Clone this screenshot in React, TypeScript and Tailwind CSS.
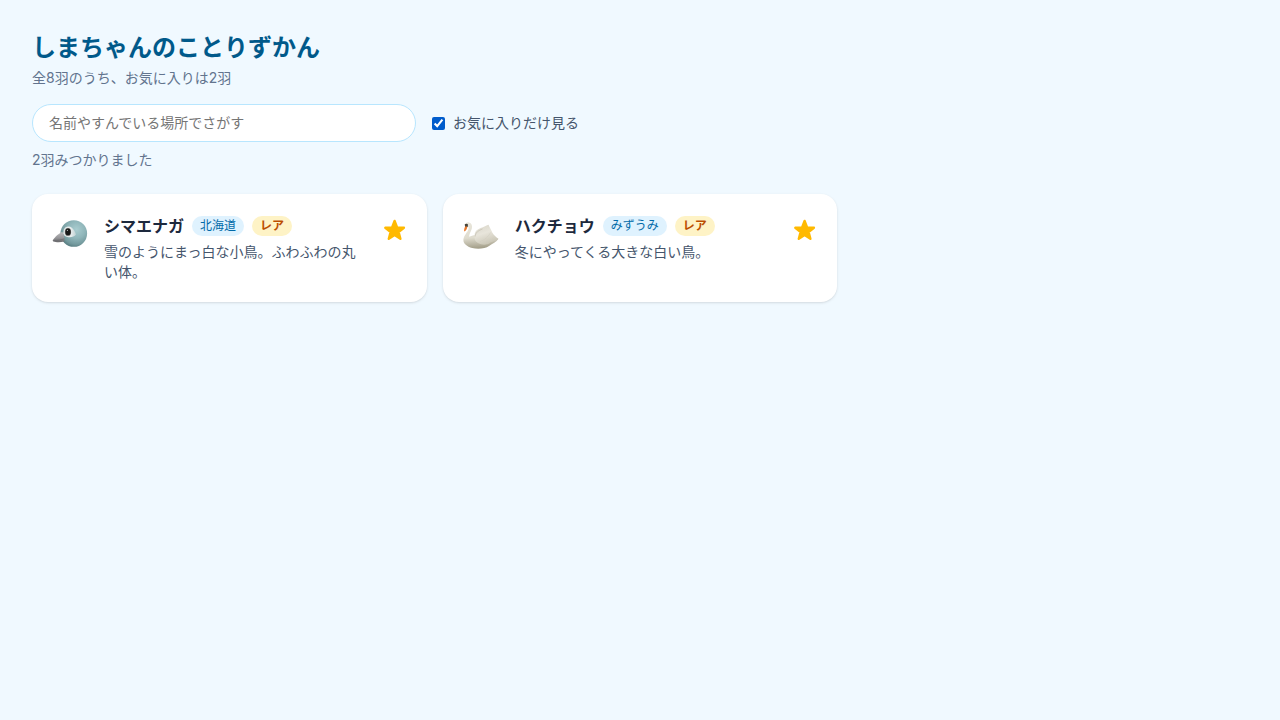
import { useState } from "react";

type Bird = {
  id: string;
  name: string;
  place: string;
  rare: boolean;
  description: string;
  Picture: () => React.ReactElement;
};

function LongTailedTit() {
  return (
    <svg viewBox="0 0 36 40" className="h-10 w-9 shrink-0" aria-hidden="true">
      <defs>
        <radialGradient id="tit-head" cx="0.6" cy="0.35" r="0.66">
          <stop offset="0" stopColor="#a9cccf" />
          <stop offset="0.5" stopColor="#8fb5b9" />
          <stop offset="0.85" stopColor="#73999d" />
          <stop offset="1" stopColor="#5c8185" />
        </radialGradient>
        <linearGradient id="tit-eye" x1="0" y1="0" x2="1" y2="0">
          <stop offset="0" stopColor="#dfe5e5" />
          <stop offset="0.6" stopColor="#e9eded" />
          <stop offset="1" stopColor="#bfd2d4" />
        </linearGradient>
        <linearGradient id="tit-beak" x1="0" y1="0" x2="0" y2="1">
          <stop offset="0" stopColor="#bcbcbe" />
          <stop offset="0.55" stopColor="#97979a" />
          <stop offset="1" stopColor="#67676a" />
        </linearGradient>
      </defs>
      <circle cx="21.8" cy="19.5" r="13.3" fill="url(#tit-head)" />
      <path d="M11.8 15.5C13 12.6 15.8 11.8 18.2 12.8C21 14 23.2 17.4 24 20.6C22.5 22.8 19.5 23.4 16.5 23.2C13.5 23 11.5 21.5 11.2 19.2Z" fill="url(#tit-eye)" />
      <path d="M0.9 26C2.5 23.7 6.5 19.2 10.4 18C12 20.5 12.9 24 12.2 27.6C8 28.7 3.5 28.4 1.5 27.5C0.8 27.1 0.5 26.6 0.9 26Z" fill="url(#tit-beak)" />
      <path d="M1.3 26.6C5.5 26.6 9.5 25.8 12.4 24.8" fill="none" stroke="#66676b" strokeWidth="0.6" />
      <ellipse cx="16" cy="17.9" rx="3.1" ry="3.9" fill="#777370" />
      <ellipse cx="16" cy="17.9" rx="2.6" ry="3.4" fill="#181818" />
      <circle cx="15.4" cy="16.3" r="0.6" fill="#c9cdcd" />
    </svg>
  );
}

function Swan() {
  return (
    <svg viewBox="0 0 36 40" className="h-10 w-9 shrink-0" aria-hidden="true">
      <defs>
        <linearGradient id="swan-body" x1="0" y1="0" x2="0.1" y2="1">
          <stop offset="0" stopColor="#e9e6db" />
          <stop offset="0.6" stopColor="#dfdccf" />
          <stop offset="1" stopColor="#a5a08b" />
        </linearGradient>
        <linearGradient id="swan-wing" x1="0" y1="0" x2="0.4" y2="1">
          <stop offset="0" stopColor="#d8d5c8" />
          <stop offset="0.5" stopColor="#e8e5db" />
          <stop offset="1" stopColor="#cbc7b7" />
        </linearGradient>
      </defs>
      <path d="M2 11.3C2.3 9 4 8.1 6 8.4C8.7 9 9.6 11.6 8.8 14.8C7.8 18.2 5.9 20.3 6.2 22.8C10.5 20.6 17 20 23 21.5L35.3 25C33.5 28 29.5 29.4 26 32C22.5 34.6 15 35.4 9.2 34C4 32.7 0.2 29.8 0.4 25.8C0.7 21.6 4.4 18.5 5.5 15.3C6 13.6 5.5 12.5 4.6 12.5Z" fill="url(#swan-body)" />
      <path d="M11.6 21.5C11.5 17 15 15 19.2 13.6C21.8 12.8 23.4 10.8 25.6 10.7C26.4 13.3 28.5 15.8 29.4 18.7C31 21.6 33.6 23.2 35.5 24.8C33.7 27.1 29.5 27.4 26.5 29.2C21.8 32.2 13.6 30.2 11.9 25.8C11.5 24.5 11.6 23 11.6 21.5Z" fill="url(#swan-wing)" />
      <path d="M12.2 22.5C12.3 18.5 15.5 16.6 19.5 14.9" fill="none" stroke="#bdb9a9" strokeWidth="0.6" />
      <path d="M17 27.5C21 26.8 26 22 27.5 18.5M20 28.6C24 27.8 28.5 25.7 31 23.6" fill="none" stroke="#d0cdc0" strokeWidth="0.5" />
      <path d="M1.7 10.6C2.4 9.6 4.2 9.6 5 10.6L4.7 13L2.3 13.8Z" fill="#45433b" />
      <path d="M2.2 12.4L4.3 12.4C4.2 14.6 3.2 16.7 1.2 17.5C0.9 15.8 1.3 13.9 2.2 12.4Z" fill="#ea7a2e" />
    </svg>
  );
}

function Star({ filled }: { filled: boolean }) {
  return (
    <svg viewBox="0 0 24 32" className="h-8 w-6" aria-hidden="true">
      <path
        d="M11.6 6.9L14.1 13.4L20.9 13.8L15.6 18.1L17.4 24.8L11.6 21.1L5.8 24.8L7.6 18.1L2.3 13.8L9.1 13.4Z"
        fill={filled ? "currentColor" : "none"}
        stroke="currentColor"
        strokeWidth="2.4"
        strokeLinejoin="round"
      />
    </svg>
  );
}

const TOTAL = 8;

const BIRDS: Bird[] = [
  {
    id: "shimaenaga",
    name: "シマエナガ",
    place: "北海道",
    rare: true,
    description: "雪のようにまっ白な小鳥。ふわふわの丸い体。",
    Picture: LongTailedTit,
  },
  {
    id: "hakucho",
    name: "ハクチョウ",
    place: "みずうみ",
    rare: true,
    description: "冬にやってくる大きな白い鳥。",
    Picture: Swan,
  },
];

export default function App() {
  const [query, setQuery] = useState("");
  const [onlyFavorites, setOnlyFavorites] = useState(true);
  const [favorites, setFavorites] = useState<string[]>(["shimaenaga", "hakucho"]);

  const shown = BIRDS.filter(
    (b) =>
      (b.name.includes(query) || b.place.includes(query)) &&
      (!onlyFavorites || favorites.includes(b.id)),
  );

  const toggle = (id: string) =>
    setFavorites((f) => (f.includes(id) ? f.filter((x) => x !== id) : [...f, id]));

  return (
    <div className="min-h-screen bg-sky-50 p-8 font-['Inter','Noto_Sans_CJK_JP',sans-serif]" lang="ja">
      <header>
        <h1 className="text-2xl font-bold text-sky-800">しまちゃんのことりずかん</h1>
        <p className="mt-1 text-sm text-slate-500">
          {`全${TOTAL}羽のうち、お気に入りは${favorites.length}羽`}
        </p>
      </header>

      <div className="mt-4 flex flex-wrap items-center gap-4">
        <input
          type="search"
          aria-label="名前やすんでいる場所でさがす"
          placeholder="名前やすんでいる場所でさがす"
          value={query}
          onChange={(e) => setQuery(e.target.value)}
          className="w-full max-w-sm rounded-full border border-sky-200 bg-white px-4 py-2 text-sm leading-5 placeholder:text-[#757575]"
        />
        <label className="flex items-center gap-2 text-sm text-slate-600">
          <input
            type="checkbox"
            checked={onlyFavorites}
            onChange={(e) => setOnlyFavorites(e.target.checked)}
            className="accent-[#005ccc]"
          />
          お気に入りだけ見る
        </label>
      </div>

      <p className="mt-2 text-sm text-slate-500">{`${shown.length}羽みつかりました`}</p>

      <ul className="mt-6 grid gap-4 sm:grid-cols-2 lg:grid-cols-3">
        {shown.map(({ id, name, place, rare, description, Picture }) => (
          <li key={id} className="flex items-start gap-4 rounded-2xl bg-white p-5 shadow-sm">
            <Picture />
            <div className="min-w-0 flex-1">
              <div className="flex items-center gap-2">
                <h2 className="font-bold text-slate-800">{name}</h2>
                <span className="rounded-full bg-sky-100 px-2 py-0.5 text-xs text-sky-700">{place}</span>
                {rare && (
                  <span className="rounded-full bg-amber-100 px-2 py-0.5 text-xs font-bold text-amber-700">レア</span>
                )}
              </div>
              <p className="mt-1 text-sm text-slate-600">{description}</p>
            </div>
            <button
              type="button"
              aria-label={`${name}をお気に入りにする`}
              aria-pressed={favorites.includes(id)}
              onClick={() => toggle(id)}
              className="text-amber-400"
            >
              <Star filled={favorites.includes(id)} />
            </button>
          </li>
        ))}
      </ul>
    </div>
  );
}
